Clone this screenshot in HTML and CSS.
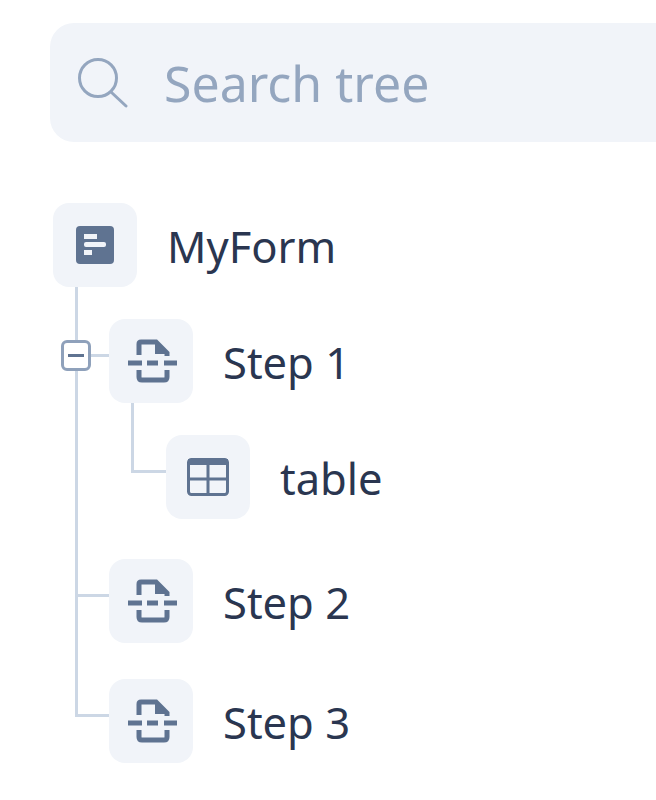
FILE: index.html
```html
<!DOCTYPE html>
<html lang="en">
<head>
  <meta charset="UTF-8">
  <meta name="viewport" content="width=device-width, initial-scale=1.0">
  <title>Form tree</title>
  <link rel="stylesheet" href="styles.css">
</head>
<body>
  <div class="search">
    <svg class="search-icon" width="50" height="50" viewBox="0 0 50 50" fill="none" stroke="#94a6bf" stroke-width="3" stroke-linecap="round">
      <circle cx="20" cy="20" r="18.5"/>
      <path d="M33 34 L48 48"/>
    </svg>
    <span class="search-text">Search tree</span>
  </div>

  <div class="tree">
    <div class="node node-root">
      <div class="tile">
        <svg width="38" height="38" viewBox="0 0 38 38">
          <rect width="38" height="38" rx="4" fill="#5f7391"/>
          <rect x="8" y="8" width="13" height="5" fill="#f1f4f9"/>
          <rect x="8" y="16" width="22" height="5" rx="2" fill="#f1f4f9"/>
          <rect x="8" y="24" width="8" height="5" fill="#f1f4f9"/>
        </svg>
      </div>
      <span class="label">MyForm</span>
    </div>

    <div class="node node-step node-open">
      <div class="toggle"><span class="toggle-bar"></span></div>
      <div class="tile">
        <svg width="54" height="46" viewBox="-1 0 54 46" fill="none" stroke="#5f7391" stroke-width="5">
          <path d="M14 17 V6 Q14 4 16 4 H31 L42 15 V18"/>
          <path d="M31 4 V15 H42" fill="#5f7391" stroke-width="2"/>
          <path d="M14 32 V39 Q14 42 17 42 H39 Q42 42 42 39 V32"/>
          <path d="M3 25 H17 M22 25 H33 M39 25 H52"/>
        </svg>
      </div>
      <span class="label">Step 1</span>
    </div>

    <div class="node node-child">
      <div class="tile">
        <svg width="42" height="38" viewBox="0 0 42 38" fill="none" stroke="#5f7391" stroke-width="3">
          <rect x="1.5" y="1.5" width="39" height="35" rx="3"/>
          <path d="M1 4 H41" stroke-width="6"/>
          <path d="M1 21 H41 M21 3 V37"/>
        </svg>
      </div>
      <span class="label">table</span>
    </div>

    <div class="node node-step node-two">
      <div class="tile">
        <svg width="54" height="46" viewBox="-1 0 54 46" fill="none" stroke="#5f7391" stroke-width="5">
          <path d="M14 17 V6 Q14 4 16 4 H31 L42 15 V18"/>
          <path d="M31 4 V15 H42" fill="#5f7391" stroke-width="2"/>
          <path d="M14 32 V39 Q14 42 17 42 H39 Q42 42 42 39 V32"/>
          <path d="M3 25 H17 M22 25 H33 M39 25 H52"/>
        </svg>
      </div>
      <span class="label">Step 2</span>
    </div>

    <div class="node node-step node-three">
      <div class="tile">
        <svg width="54" height="46" viewBox="-1 0 54 46" fill="none" stroke="#5f7391" stroke-width="5">
          <path d="M14 17 V6 Q14 4 16 4 H31 L42 15 V18"/>
          <path d="M31 4 V15 H42" fill="#5f7391" stroke-width="2"/>
          <path d="M14 32 V39 Q14 42 17 42 H39 Q42 42 42 39 V32"/>
          <path d="M3 25 H17 M22 25 H33 M39 25 H52"/>
        </svg>
      </div>
      <span class="label">Step 3</span>
    </div>
  </div>
</body>
</html>
```

FILE: styles.css
```css
body, html {
  margin: 0;
  padding: 0;
  height: 100%;
  overflow: hidden;
  background-color: #ffffff;
  font-family: "Noto Sans", sans-serif;
}

.search {
  display: flex;
  align-items: center;
  gap: 36px;
  box-sizing: border-box;
  height: 119px;
  margin: 23px 0 0 50px;
  padding-left: 28px;
  background-color: #f1f4f9;
  border-radius: 24px 0 0 24px;
}

.search-text {
  font-size: 50px;
  color: #94a6bf;
}

.tree {
  position: relative;
  margin: 61px 0 0 53px;
}

.node {
  position: relative;
  display: flex;
  align-items: center;
  gap: 30px;
  height: 84px;
}

.tile {
  display: flex;
  align-items: center;
  justify-content: center;
  flex: none;
  width: 84px;
  height: 84px;
  background-color: #f1f4f9;
  border-radius: 16px;
}

.label {
  padding-top: 2px;
  font-size: 43.5px;
  color: #2a3650;
}

.node-step {
  margin-left: 56px;
}

.node-open {
  margin-top: 32px;
}

.node-child {
  margin-left: 113px;
  margin-top: 32px;
}

.node-two {
  margin-top: 40px;
}

.node-three {
  margin-top: 36px;
}

/* connector lines */
.node-root::after {
  content: "";
  position: absolute;
  left: 22px;
  top: 84px;
  width: 3px;
  height: 430px;
  background-color: #ccd7e5;
}

.node-step::before {
  content: "";
  position: absolute;
  left: -34px;
  top: 35px;
  width: 34px;
  height: 3px;
  background-color: #ccd7e5;
}

.node-child::before {
  content: "";
  position: absolute;
  left: -35px;
  top: -32px;
  width: 35px;
  height: 70px;
  box-sizing: border-box;
  border-left: 3px solid #ccd7e5;
  border-bottom: 3px solid #ccd7e5;
}

.toggle {
  position: absolute;
  left: -48px;
  top: 21px;
  display: flex;
  align-items: center;
  justify-content: center;
  box-sizing: border-box;
  width: 30px;
  height: 31px;
  background-color: #ffffff;
  border: 3px solid #8fa1bb;
  border-radius: 6px;
}

.toggle-bar {
  width: 16px;
  height: 3px;
  background-color: #5f7391;
}
```
